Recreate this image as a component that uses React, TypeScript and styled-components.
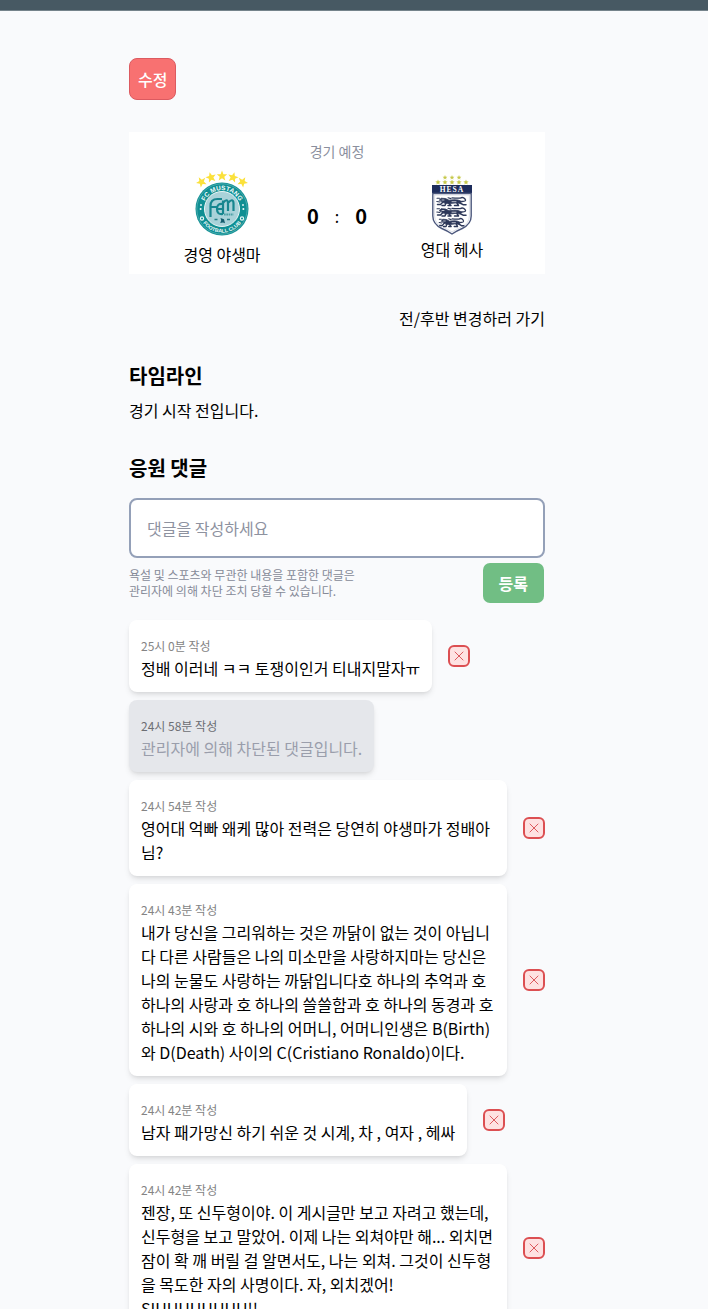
import React from "react";
import styled, { createGlobalStyle, css } from "styled-components";

const GlobalStyle = createGlobalStyle`
  *, *::before, *::after { box-sizing: border-box; }
  body {
    margin: 0;
    background: #f9fafc;
    color: #000;
    font-family: "Noto Sans CJK KR", "Noto Sans", sans-serif;
    font-size: 16px;
    line-height: 24px;
  }
  h2, p, ul { margin: 0; padding: 0; }
  button, input { font: inherit; }
`;

const TopBar = styled.header`
  height: 11px;
  background: #475963;
  border-bottom: 1px solid #75838b;
`;

const Page = styled.main`
  padding: 47px 50px 48px 16px;
`;

const Column = styled.div`
  max-width: 416px;
  margin: 0 auto;
  display: flex;
  flex-direction: column;
  gap: 32px;
`;

const EditButton = styled.button`
  align-self: flex-start;
  padding: 8px;
  border: 1px solid #dc5a60;
  border-radius: 8px;
  background: #f87171;
  color: #fff;
  font-weight: 500;
  cursor: pointer;
`;

const MatchCard = styled.section`
  padding: 8px 32px;
  background: #fff;
`;

const MatchStatus = styled.p`
  margin-bottom: 8px;
  text-align: center;
  font-size: 14px;
  line-height: 22px;
  color: #8b8f9e;
`;

const MatchBody = styled.div`
  display: grid;
  grid-template-columns: 1fr 108px 1fr;
  align-items: center;
`;

const Team = styled.div`
  display: flex;
  flex-direction: column;
  align-items: center;
  gap: 2px;

  svg { display: block; }
`;

const Score = styled.div`
  display: flex;
  align-items: center;
  justify-content: center;
  gap: 16px;
  padding-bottom: 4px;

  strong { font-size: 20px; font-weight: 700; }
`;

const HalfLink = styled.a`
  align-self: flex-end;
  color: inherit;
  text-decoration: none;
`;

const Section = styled.section<{ $gap: number }>`
  display: flex;
  flex-direction: column;
  gap: ${(p) => p.$gap}px;
`;

const Title = styled.h2`
  font-size: 20px;
  line-height: 28px;
  font-weight: 700;
`;

const CommentForm = styled.form`
  display: flex;
  flex-direction: column;
  gap: 4px;
`;

const CommentInput = styled.input`
  width: 100%;
  height: 60px;
  padding: 0 16px;
  border: 2px solid #94a0b8;
  border-radius: 8px;
  background: #fff;

  &::placeholder { color: #8e929f; opacity: 1; }
`;

const FormFooter = styled.div`
  display: flex;
  align-items: center;
  justify-content: space-between;
`;

const Notice = styled.p`
  font-size: 12px;
  line-height: 16px;
  color: #868a98;
`;

const SubmitButton = styled.button`
  padding: 8px 16px;
  border: 1px solid transparent;
  border-radius: 8px;
  background: #71be84 padding-box;
  color: #fff;
  font-weight: 700;
  cursor: pointer;
`;

const CommentList = styled.ul`
  display: flex;
  flex-direction: column;
  gap: 8px;
  list-style: none;
`;

const CommentRow = styled.li`
  display: flex;
  align-items: center;
  gap: 16px;
  padding-right: 38px;

  &:has(button) { padding-right: 0; }
`;

const Bubble = styled.div<{ $blocked?: boolean }>`
  padding: 12px;
  border-radius: 8px;
  background: #fff;
  box-shadow: 0 4px 6px -1px rgba(0, 0, 0, 0.1), 0 2px 4px -2px rgba(0, 0, 0, 0.1);
  ${(p) =>
    p.$blocked &&
    css`
      background: #e5e7eb;
      color: #9a9eab;
    `}
`;

const TimeLine = styled.div<{ $blocked?: boolean }>`
  time {
    font-size: 12px;
    line-height: 16px;
    color: ${(p) => (p.$blocked ? "#6c6e73" : "#848484")};
  }
`;

const DeleteButton = styled.button`
  flex: none;
  display: grid;
  place-items: center;
  width: 22px;
  height: 22px;
  padding: 0;
  border: 2px solid #dc4f52;
  border-radius: 6px;
  background: #fee2e2;
  color: #dc5a5e;
  cursor: pointer;
`;

const STAR = "M0-5 1.3-1.7 4.8-1.6 2.1.6 3 4 0 2-3 4-2.1.6-4.8-1.6-1.3-1.7Z";

function Star({ x, y, scale, turn = 0, fill }: { x: number; y: number; scale: number; turn?: number; fill: string }) {
  return <path d={STAR} fill={fill} transform={`translate(${x} ${y}) rotate(${turn}) scale(${scale})`} />;
}

function MustangLogo() {
  const stars = [
    [6.5, 11, -30],
    [16, 6.5, -15],
    [27, 5, 0],
    [38, 6.5, 15],
    [47.5, 11, 30],
  ];
  return (
    <svg width="54" height="70" viewBox="0 -1 54 70" role="img" aria-label="FC Mustang">
      <defs>
        <path id="mustang-top" d="M8.2 38a18.8 18.8 0 0 1 37.600 0" />
        <path id="mustang-bottom" d="M3.400 38a23.600 23.600 0 0 0 47.200 0" />
      </defs>
      {stars.map(([x, y, turn]) => (
        <Star key={x} x={x} y={y} scale={1.1} turn={turn} fill="#fbe13b" />
      ))}
      <circle cx="27" cy="38" r="26.5" fill="#0f8f93" />
      <circle cx="27" cy="38" r="25.2" fill="none" stroke="#5fb5b7" strokeWidth=".7" />
      <circle cx="27" cy="38" r="17.5" fill="#a9d2d9" stroke="#e9f6f6" strokeWidth="1" />
      <g fill="#f0fafa" fontFamily="Liberation Sans, sans-serif" fontWeight="700">
        <text fontSize="6.5" textAnchor="middle">
          <textPath href="#mustang-top" startOffset="50%">FC MUSTANG</textPath>
        </text>
        <text fontSize="5.2" textAnchor="middle">
          <textPath href="#mustang-bottom" startOffset="50%">FOOTBALL CLUB</textPath>
        </text>
        <circle cx="5.6" cy="38" r="1" />
        <circle cx="6" cy="34" r=".9" />
        <circle cx="48.4" cy="38" r="1" />
        <circle cx="48" cy="34" r=".9" />
      </g>
      <g fill="none" stroke="#e9f6f6" strokeWidth="1.2">
        <circle cx="7" cy="47.5" r="1.6" />
        <circle cx="47" cy="47.5" r="1.6" />
      </g>
      <g fill="none" stroke="#17868f" strokeWidth="2.2">
        <path d="M15.500 46V35q0-7 7-7h4.500M15.500 36h7" />
        <path d="M28 33q-6-1-6 5t6 5M22 38h5" />
        <path d="M28 43V29.500M28 32q4.500-5.500 5 0v8M33 32q5-5.500 5.500 0v8" />
      </g>
      <path d="M29 43.500h9.500" stroke="#4c9fa5" strokeWidth="1.8" strokeDasharray="1.700 .6" />
      <path d="M25.500 47l3.500 1.200 1 4-2-.8-2.800.6 1-2.500z" fill="#145d6e" />
      <path d="M19.500 48.500h3m9.500 0h3" stroke="#267f88" strokeWidth="1.6" />
    </svg>
  );
}

function Lion({ y }: { y: number }) {
  return (
    <g transform={`translate(5 ${y})`} fill="none" stroke="#2d3859" strokeLinecap="round" strokeLinejoin="round">
      <path d="M3.500 3 5 1.200 9.500 1.500 13 3.200q5-.8 9-.2l4 1.500-2 1.800q-5-.8-10 .2l-5-.2z" fill="#2d3859" strokeWidth=".8" />
      <path d="M7 5 4.500 7.500H1.500M10 6l-1 2.500H6M13 6.500l2 2h-3M21 6l1.500 2.500H18.500M24 6l3.500 1.800h2.500" strokeWidth="1.500" />
      <path d="M26 4.500Q31 4.500 29 2t-5-.8l-5 0-3-.4" strokeWidth="1.300" />
      <path d="M1 1.200h2.500M.8 4.500 4 5M12 .8l3 .8" strokeWidth="1.100" />
      <path d="M6 3h2M16 4.700h4" stroke="#fff" strokeWidth=".7" />
    </g>
  );
}

function HesaLogo() {
  return (
    <svg width="42" height="60" viewBox="0 0 42 60" role="img" aria-label="HESA">
      {[14, 21, 28].map((x) => (
        <Star key={x} x={x} y={2.6} scale={0.5} fill="#c6c84a" />
      ))}
      {[7, 14, 21, 28, 35].map((x) => (
        <Star key={x} x={x} y={7.3} scale={0.55} fill="#c6c84a" />
      ))}
      <path d="M1 10h40v8H1z" fill="#1d2c5b" />
      <text
        x="21"
        y="16.6"
        textAnchor="middle"
        fontFamily="Liberation Serif, serif"
        fontSize="7.5"
        fontWeight="700"
        letterSpacing="1"
        fill="#fff"
      >
        HESA
      </text>
      <path
        d="M1.8 18.5h38.4v22.5q0 8-9 12.5-6 2.5-10.2 5.5-4.2-3-10.2-5.5-9-4.5-9-12.5z"
        fill="#fff"
        stroke="#4c587d"
        strokeWidth="1.4"
      />
      <path
        d="M3.6 20h34.8v21q0 7-8 11-5.5 2.3-9.4 5-3.9-2.7-9.4-5-8-4-8-11z"
        fill="none"
        stroke="#c3c8d6"
        strokeWidth=".6"
      />
      <Lion y={22} />
      <Lion y={32.5} />
      <g transform="translate(3.2 0) scale(.85 1)">
        <Lion y={43} />
      </g>
    </svg>
  );
}

type Comment = { time: string; text: string; blocked?: boolean };

const comments: Comment[] = [
  { time: "25시 0분 작성", text: "정배 이러네 ㅋㅋ 토쟁이인거 티내지말자ㅠ" },
  { time: "24시 58분 작성", text: "관리자에 의해 차단된 댓글입니다.", blocked: true },
  { time: "24시 54분 작성", text: "영어대 억빠 왜케 많아 전력은 당연히 야생마가 정배아님?" },
  {
    time: "24시 43분 작성",
    text: "내가 당신을 그리워하는 것은 까닭이 없는 것이 아닙니다 다른 사람들은 나의 미소만을 사랑하지마는 당신은 나의 눈물도 사랑하는 까닭입니다호 하나의 추억과 호 하나의 사랑과 호 하나의 쓸쓸함과 호 하나의 동경과 호 하나의 시와 호 하나의 어머니, 어머니인생은 B(Birth)와 D(Death) 사이의 C(Cristiano Ronaldo)이다.",
  },
  { time: "24시 42분 작성", text: "남자 패가망신 하기 쉬운 것 시계, 차 , 여자 , 헤싸" },
  {
    time: "24시 42분 작성",
    text: "젠장, 또 신두형이야. 이 게시글만 보고 자려고 했는데, 신두형을 보고 말았어. 이제 나는 외쳐야만 해... 외치면 잠이 확 깨 버릴 걸 알면서도, 나는 외쳐. 그것이 신두형을 목도한 자의 사명이다. 자, 외치겠어! SIUUUUUUUU!!",
  },
];

function CommentItem({ time, text, blocked }: Comment) {
  return (
    <CommentRow>
      <Bubble $blocked={blocked}>
        <TimeLine $blocked={blocked}>
          <time>{time}</time>
        </TimeLine>
        <p>{text}</p>
      </Bubble>
      {!blocked && (
        <DeleteButton type="button" aria-label="댓글 차단">
          <svg width="10" height="10" viewBox="0 0 10 10" fill="none" stroke="currentColor" strokeLinecap="round">
            <path d="M1 1l8 8M9 1 1 9" />
          </svg>
        </DeleteButton>
      )}
    </CommentRow>
  );
}

export default function App() {
  return (
    <>
      <GlobalStyle />
      <TopBar />
      <Page>
        <Column>
          <EditButton type="button">수정</EditButton>
          <MatchCard>
            <MatchStatus>경기 예정</MatchStatus>
            <MatchBody>
              <Team>
                <MustangLogo />
                <span>경영 야생마</span>
              </Team>
              <Score>
                <strong>0</strong>
                <span>:</span>
                <strong>0</strong>
              </Score>
              <Team>
                <HesaLogo />
                <span>영대 헤사</span>
              </Team>
            </MatchBody>
          </MatchCard>
          <HalfLink href="#half">전/후반 변경하러 가기</HalfLink>
          <Section $gap={8}>
            <Title>타임라인</Title>
            <p>경기 시작 전입니다.</p>
          </Section>
          <Section $gap={16}>
            <Title>응원 댓글</Title>
            <CommentForm onSubmit={(e) => e.preventDefault()}>
              <CommentInput type="text" aria-label="댓글" placeholder="댓글을 작성하세요" />
              <FormFooter>
                <Notice>
                  욕설 및 스포츠와 무관한 내용을 포함한 댓글은
                  <br />
                  관리자에 의해 차단 조치 당할 수 있습니다.
                </Notice>
                <SubmitButton type="submit">등록</SubmitButton>
              </FormFooter>
            </CommentForm>
            <CommentList>
              {comments.map((c) => (
                <CommentItem key={c.time + c.text} {...c} />
              ))}
            </CommentList>
          </Section>
        </Column>
      </Page>
    </>
  );
}
